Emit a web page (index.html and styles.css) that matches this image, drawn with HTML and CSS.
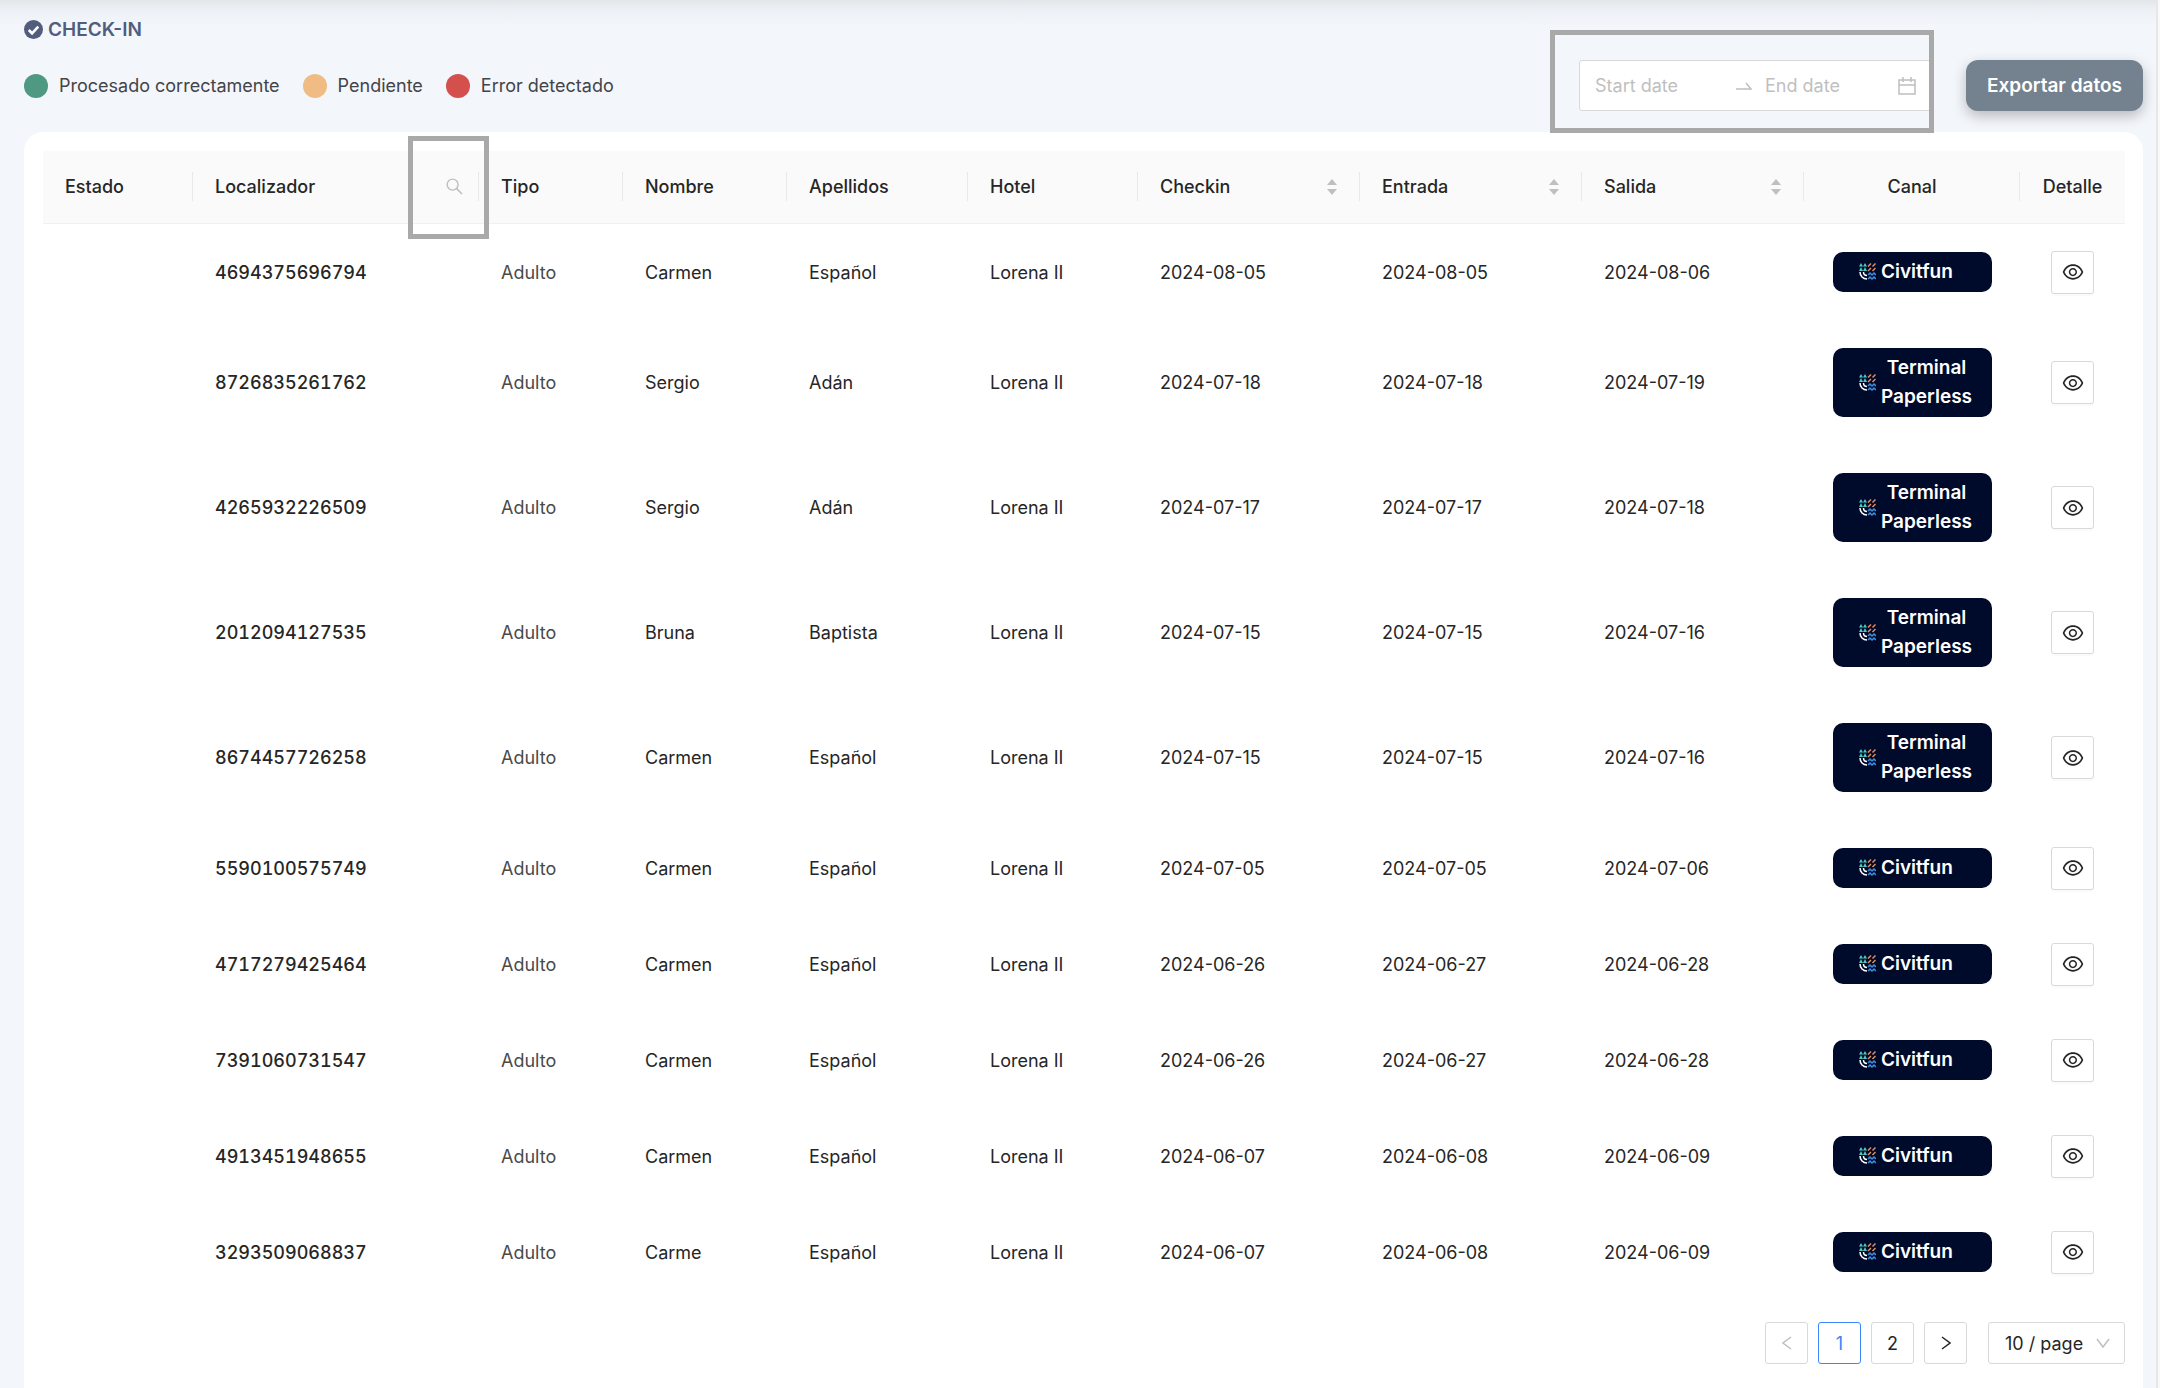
FILE: index.html
```html
<!DOCTYPE html>
<html lang="es">
<head>
    <meta charset="UTF-8">
    <meta name="viewport" content="width=device-width, initial-scale=1.0">
    <title>Check-in</title>
    <link rel="stylesheet" href="styles.css">
</head>
<body>

    <svg class="sprite" aria-hidden="true">
        <symbol id="icon-eye" viewBox="0 0 1024 1024">
            <path d="M942.2 486.2C847.4 286.5 704.1 186 512 186c-192.200 0-335.400 100.500-430.200 300.300a60.300 60.300 0 0 0 0 51.500C176.600 737.500 319.900 838 512 838c192.200 0 335.400-100.500 430.200-300.300 7.700-16.200 7.700-35 0-51.500zM512 766c-161.300 0-279.400-81.800-362.700-254C232.600 339.800 350.700 258 512 258c161.300 0 279.400 81.800 362.700 254C791.500 684.200 673.400 766 512 766zm-4-430c-97.200 0-176 78.800-176 176s78.800 176 176 176 176-78.800 176-176-78.800-176-176-176zm0 288c-61.900 0-112-50.100-112-112s50.100-112 112-112 112 50.100 112 112-50.100 112-112 112z"/>
        </symbol>
        <symbol id="icon-sort" viewBox="0 0 12 18">
            <path d="M6 1l5 6H1zM6 17l5-6H1z"/>
        </symbol>
        <symbol id="icon-civitfun" viewBox="0 0 34 34">
            <path fill="#4cc9c0" d="M4 0l4 7H0zM12 0l4 7H8zM4 8l4 8H0zM12 8l4 8H8z"/>
            <path fill="none" stroke="#e58a5b" stroke-width="3" d="M18 7l6-6M27 7l6-6M18 16l6-6M27 16l6-6"/>
            <path fill="none" stroke="#fff" stroke-width="3" d="M2 18c0 8 6 14 14 14M9 18c0 4 3 7 7 7"/>
            <path fill="none" stroke="#3b8fe0" stroke-width="3" d="M18 24l4-4 4 4 4-4 4 4M18 32l4-4 4 4 4-4 4 4"/>
        </symbol>
    </svg>

    <div class="page">
        <h1 class="title">
            <svg class="title-icon" viewBox="0 0 20 20"><circle cx="10" cy="10" r="10" fill="currentColor"/><path d="M5 10.500l3.500 3.500L15 7" fill="none" stroke="#fff" stroke-width="2.800"/></svg>
            CHECK-IN
        </h1>

        <div class="toolbar">
            <ul class="legend">
                <li><span class="dot dot-ok"></span>Procesado correctamente</li>
                <li><span class="dot dot-pending"></span>Pendiente</li>
                <li><span class="dot dot-error"></span>Error detectado</li>
            </ul>
            <div class="range-wrap">
                <div class="range">
                    <input type="text" placeholder="Start date" aria-label="Start date">
                    <svg class="range-arrow" viewBox="0 0 16 8"><path d="M0 7h15L10 1" fill="none" stroke="currentColor" stroke-width="1.500"/></svg>
                    <input type="text" placeholder="End date" aria-label="End date">
                    <svg class="range-calendar" viewBox="0 0 18 18"><path d="M1 3h16v14H1zM1 8h16M5 0v5M13 0v5" fill="none" stroke="currentColor" stroke-width="1.500"/></svg>
                </div>
                <span class="marker marker-range"></span>
            </div>
            <button class="export" type="button">Exportar datos</button>
        </div>

        <main class="card">
            <table class="bookings">
                <colgroup>
                    <col class="col-estado"><col class="col-localizador"><col class="col-tipo"><col class="col-nombre"><col class="col-apellidos"><col class="col-hotel"><col class="col-fecha"><col class="col-fecha"><col class="col-fecha"><col class="col-canal"><col class="col-detalle">
                </colgroup>
                <thead>
                    <tr>
                        <th>Estado</th>
                        <th>
                            <div class="th-tools">Localizador
                                <button class="th-search" type="button" aria-label="Buscar localizador"><svg viewBox="0 0 18 18"><circle cx="7" cy="7" r="5.800" fill="none" stroke="currentColor" stroke-width="1.500"/><path d="M11 11l6 6" stroke="currentColor" stroke-width="1.700"/></svg></button>
                            </div>
                            <span class="marker marker-search"></span>
                        </th>
                        <th>Tipo</th>
                        <th>Nombre</th>
                        <th>Apellidos</th>
                        <th>Hotel</th>
                        <th><div class="th-tools">Checkin <svg class="sort"><use href="#icon-sort"/></svg></div></th>
                        <th><div class="th-tools">Entrada <svg class="sort"><use href="#icon-sort"/></svg></div></th>
                        <th><div class="th-tools">Salida <svg class="sort"><use href="#icon-sort"/></svg></div></th>
                        <th class="center">Canal</th>
                        <th class="center">Detalle</th>
                    </tr>
                </thead>
                <tbody>
                    <tr>
                        <td></td><td class="locator">4694375696794</td><td class="type">Adulto</td><td>Carmen</td><td>Español</td><td>Lorena II</td><td>2024-08-05</td><td>2024-08-05</td><td>2024-08-06</td>
                        <td><div class="channel"><svg><use href="#icon-civitfun"/></svg><span>Civitfun</span></div></td>
                        <td><button class="detail" type="button" aria-label="Ver detalle"><svg><use href="#icon-eye"/></svg></button></td>
                    </tr>
                    <tr>
                        <td></td><td class="locator">8726835261762</td><td class="type">Adulto</td><td>Sergio</td><td>Adán</td><td>Lorena II</td><td>2024-07-18</td><td>2024-07-18</td><td>2024-07-19</td>
                        <td><div class="channel"><svg><use href="#icon-civitfun"/></svg><span>Terminal<br>Paperless</span></div></td>
                        <td><button class="detail" type="button" aria-label="Ver detalle"><svg><use href="#icon-eye"/></svg></button></td>
                    </tr>
                    <tr>
                        <td></td><td class="locator">4265932226509</td><td class="type">Adulto</td><td>Sergio</td><td>Adán</td><td>Lorena II</td><td>2024-07-17</td><td>2024-07-17</td><td>2024-07-18</td>
                        <td><div class="channel"><svg><use href="#icon-civitfun"/></svg><span>Terminal<br>Paperless</span></div></td>
                        <td><button class="detail" type="button" aria-label="Ver detalle"><svg><use href="#icon-eye"/></svg></button></td>
                    </tr>
                    <tr>
                        <td></td><td class="locator">2012094127535</td><td class="type">Adulto</td><td>Bruna</td><td>Baptista</td><td>Lorena II</td><td>2024-07-15</td><td>2024-07-15</td><td>2024-07-16</td>
                        <td><div class="channel"><svg><use href="#icon-civitfun"/></svg><span>Terminal<br>Paperless</span></div></td>
                        <td><button class="detail" type="button" aria-label="Ver detalle"><svg><use href="#icon-eye"/></svg></button></td>
                    </tr>
                    <tr>
                        <td></td><td class="locator">8674457726258</td><td class="type">Adulto</td><td>Carmen</td><td>Español</td><td>Lorena II</td><td>2024-07-15</td><td>2024-07-15</td><td>2024-07-16</td>
                        <td><div class="channel"><svg><use href="#icon-civitfun"/></svg><span>Terminal<br>Paperless</span></div></td>
                        <td><button class="detail" type="button" aria-label="Ver detalle"><svg><use href="#icon-eye"/></svg></button></td>
                    </tr>
                    <tr>
                        <td></td><td class="locator">5590100575749</td><td class="type">Adulto</td><td>Carmen</td><td>Español</td><td>Lorena II</td><td>2024-07-05</td><td>2024-07-05</td><td>2024-07-06</td>
                        <td><div class="channel"><svg><use href="#icon-civitfun"/></svg><span>Civitfun</span></div></td>
                        <td><button class="detail" type="button" aria-label="Ver detalle"><svg><use href="#icon-eye"/></svg></button></td>
                    </tr>
                    <tr>
                        <td></td><td class="locator">4717279425464</td><td class="type">Adulto</td><td>Carmen</td><td>Español</td><td>Lorena II</td><td>2024-06-26</td><td>2024-06-27</td><td>2024-06-28</td>
                        <td><div class="channel"><svg><use href="#icon-civitfun"/></svg><span>Civitfun</span></div></td>
                        <td><button class="detail" type="button" aria-label="Ver detalle"><svg><use href="#icon-eye"/></svg></button></td>
                    </tr>
                    <tr>
                        <td></td><td class="locator">7391060731547</td><td class="type">Adulto</td><td>Carmen</td><td>Español</td><td>Lorena II</td><td>2024-06-26</td><td>2024-06-27</td><td>2024-06-28</td>
                        <td><div class="channel"><svg><use href="#icon-civitfun"/></svg><span>Civitfun</span></div></td>
                        <td><button class="detail" type="button" aria-label="Ver detalle"><svg><use href="#icon-eye"/></svg></button></td>
                    </tr>
                    <tr>
                        <td></td><td class="locator">4913451948655</td><td class="type">Adulto</td><td>Carmen</td><td>Español</td><td>Lorena II</td><td>2024-06-07</td><td>2024-06-08</td><td>2024-06-09</td>
                        <td><div class="channel"><svg><use href="#icon-civitfun"/></svg><span>Civitfun</span></div></td>
                        <td><button class="detail" type="button" aria-label="Ver detalle"><svg><use href="#icon-eye"/></svg></button></td>
                    </tr>
                    <tr>
                        <td></td><td class="locator">3293509068837</td><td class="type">Adulto</td><td>Carme</td><td>Español</td><td>Lorena II</td><td>2024-06-07</td><td>2024-06-08</td><td>2024-06-09</td>
                        <td><div class="channel"><svg><use href="#icon-civitfun"/></svg><span>Civitfun</span></div></td>
                        <td><button class="detail" type="button" aria-label="Ver detalle"><svg><use href="#icon-eye"/></svg></button></td>
                    </tr>
                </tbody>
            </table>

            <nav class="pagination" aria-label="Paginación">
                <button type="button" disabled aria-label="Anterior"><svg viewBox="0 0 10 14"><path d="M9 1L1 7l8 6"/></svg></button>
                <button type="button" class="active">1</button>
                <button type="button">2</button>
                <button type="button" aria-label="Siguiente"><svg viewBox="0 0 10 14"><path d="M1 1l8 6-8 6"/></svg></button>
                <div class="page-size">
                    <select aria-label="Filas por página">
                        <option>10 / page</option>
                        <option>20 / page</option>
                        <option>50 / page</option>
                    </select>
                    <svg viewBox="0 0 14 10"><path d="M1 1l6 8 6-8"/></svg>
                </div>
            </nav>
        </main>
    </div>

</body>
</html>
```
FILE: styles.css
```css
* {
    box-sizing: border-box;
}
body {
    margin: 0;
    font-family: Inter, sans-serif;
    font-size: 18px;
    line-height: 29px;
    color: #262626;
    background-color: #f9f9f9;
}
button, input, select {
    font: inherit;
    color: inherit;
}
svg {
    display: block;
    flex: none;
}
.sprite {
    display: none;
}
.page {
    display: flex;
    flex-direction: column;
    min-height: 100vh;
    margin-right: 2px;
    padding: 15px 13px 0 24px;
    border-right: 2px solid #e6e7ea;
    background: linear-gradient(#e2e6e9, #edf0f4 10px, #f3f6fb 26px);
}
.title {
    display: flex;
    align-items: center;
    gap: 5px;
    margin: 0 0 16px;
    font-size: 19px;
    font-weight: 600;
    color: #525c7d;
}
.title-icon {
    width: 19px;
    height: 19px;
}
.toolbar {
    display: flex;
    align-items: center;
    margin-bottom: 21px;
}
.legend {
    display: flex;
    gap: 23px;
    flex: 1;
    margin: 0;
    padding: 0;
    list-style: none;
    color: #434448;
}
.legend li {
    display: flex;
    align-items: center;
    gap: 11px;
}
.dot {
    width: 24px;
    height: 24px;
    border-radius: 50%;
}
.dot-ok {
    background-color: #4f9882;
}
.dot-pending {
    background-color: #f0bc84;
}
.dot-error {
    background-color: #d3504c;
}
.range-wrap {
    position: relative;
    margin-right: 35px;
}
.range {
    display: flex;
    align-items: center;
    height: 51px;
    padding: 0 14px 0 15px;
    border: 1px solid #d9d9d9;
    border-radius: 3px;
    background-color: white;
    color: #bfbfbf;
}
.range input {
    width: 133px;
    padding: 0;
    border: none;
    outline: none;
    background: none;
    color: #262626;
}
.range input::placeholder {
    color: #bfbfbf;
    opacity: 1;
}
.range-arrow {
    width: 16px;
    height: 8px;
    margin: 0 13px 0 8px;
}
.range-calendar {
    width: 18px;
    height: 18px;
}
/* grey highlight frames */
.marker {
    position: absolute;
    border: 5px solid #a9a9a9;
    pointer-events: none;
}
.marker-range {
    top: -30px;
    right: -3px;
    bottom: -22px;
    left: -29px;
}
.marker-search {
    top: -15px;
    right: -10px;
    width: 81px;
    height: 103px;
    z-index: 1;
}
.export {
    height: 51px;
    padding: 0 21px;
    border: none;
    border-radius: 12px;
    background-color: #74828f;
    color: white;
    font-size: 19px;
    font-weight: 600;
    box-shadow: 0 5px 14px rgba(0, 0, 0, 0.25);
    cursor: pointer;
}
.card {
    flex: 1;
    padding: 19px 18px 24px 19px;
    border-radius: 19px 19px 0 0;
    background-color: white;
}
.bookings {
    width: 100%;
    table-layout: fixed;
    border-collapse: separate;
    border-spacing: 0;
}
.col-estado {
    width: 150px;
}
.col-localizador {
    width: 286px;
}
.col-tipo {
    width: 144px;
}
.col-nombre {
    width: 164px;
}
.col-apellidos {
    width: 181px;
}
.col-hotel {
    width: 170px;
}
.col-fecha {
    width: 222px;
}
.col-canal {
    width: 216px;
}
.col-detalle {
    width: 105px;
}
.bookings th {
    position: relative;
    height: 73px;
    padding: 0 21px 1px 22px;
    border-bottom: 1px solid #f0f0f0;
    background-color: #fafafa;
    font-weight: 500;
    text-align: left;
}
.bookings th.center {
    padding: 0 0 1px;
    text-align: center;
}
.bookings th:not(:last-child)::after {
    content: "";
    position: absolute;
    top: 21px;
    right: 0;
    width: 1px;
    height: 29px;
    background-color: #e9e9e9;
}
.bookings th:first-child {
    border-top-left-radius: 3px;
}
.bookings th:last-child {
    border-top-right-radius: 3px;
}
.th-tools {
    display: flex;
    align-items: center;
    justify-content: space-between;
}
.th-search {
    padding: 0;
    border: none;
    background: none;
    color: #bfbfbf;
    margin-right: -5px;
    cursor: pointer;
}
.th-search svg {
    width: 17px;
    height: 17px;
}
.sort {
    width: 12px;
    height: 18px;
    margin-right: 1px;
    fill: #bfbfbf;
}
.bookings td {
    padding: 0 21px 0 22px;
}
.bookings td:last-child {
    padding: 0;
}
.bookings .locator {
    font-weight: 500;
    font-variant-numeric: tabular-nums;
}
.bookings .type {
    color: #4a4a4a;
}
.channel {
    display: flex;
    align-items: center;
    gap: 5px;
    width: 159px;
    margin: 28px 0 28px 7px;
    padding: 5px 8px 6px 26px;
    border-radius: 10px;
    background-color: #000a2b;
    color: white;
    font-size: 19px;
    font-weight: 600;
    text-align: center;
}
.channel svg {
    width: 17px;
    height: 17px;
}
.detail {
    display: flex;
    align-items: center;
    justify-content: center;
    width: 43px;
    height: 43px;
    margin: 0 auto;
    padding: 0;
    border: 1px solid #d9d9d9;
    border-radius: 3px;
    background-color: white;
    box-shadow: 0 2px 0 rgba(0, 0, 0, 0.02);
    cursor: pointer;
}
.detail svg {
    width: 24px;
    height: 24px;
    fill: #262626;
}
.pagination {
    display: flex;
    justify-content: flex-end;
    gap: 10px;
    margin-top: 22px;
}
.pagination button {
    display: flex;
    align-items: center;
    justify-content: center;
    width: 43px;
    height: 42px;
    padding: 0;
    border: 1px solid #d9d9d9;
    border-radius: 3px;
    background-color: white;
    cursor: pointer;
}
.pagination button svg {
    width: 10px;
    height: 14px;
}
.pagination path {
    fill: none;
    stroke: currentColor;
    stroke-width: 1.5;
}
.pagination button:disabled {
    color: #bfbfbf;
    cursor: default;
}
.pagination .active {
    border-color: #3b86f7;
    color: #3b86f7;
}
.page-size {
    position: relative;
    margin-left: 11px;
    color: #262626;
}
.page-size select {
    appearance: none;
    width: 137px;
    height: 42px;
    padding: 0 16px;
    border: 1px solid #d9d9d9;
    border-radius: 3px;
    background-color: white;
}
.page-size svg {
    position: absolute;
    top: 16px;
    right: 15px;
    width: 14px;
    height: 10px;
    color: #bfbfbf;
    pointer-events: none;
}
```
